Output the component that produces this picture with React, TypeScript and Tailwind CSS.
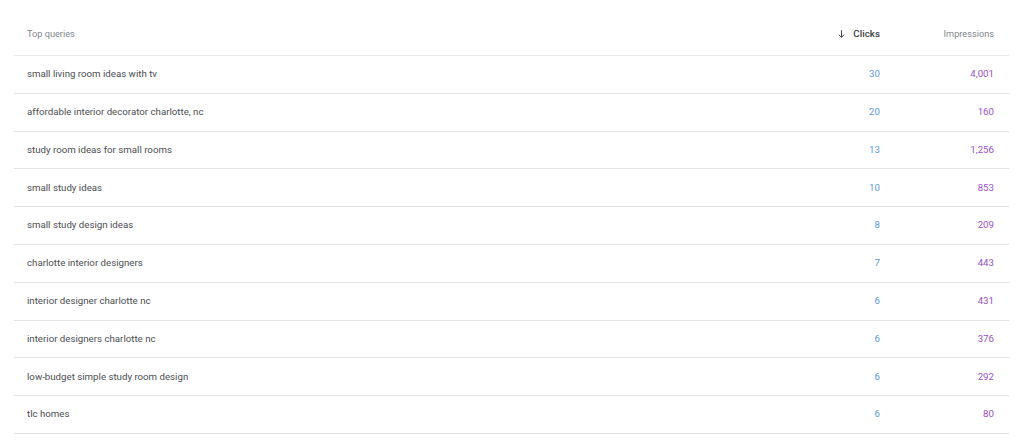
const rows = [
  { q: "small living room ideas with tv", c: "30", i: "4,001" },
  { q: "affordable interior decorator charlotte, nc", c: "20", i: "160" },
  { q: "study room ideas for small rooms", c: "13", i: "1,256" },
  { q: "small study ideas", c: "10", i: "853" },
  { q: "small study design ideas", c: "8", i: "209" },
  { q: "charlotte interior designers", c: "7", i: "443" },
  { q: "interior designer charlotte nc", c: "6", i: "431" },
  { q: "interior designers charlotte nc", c: "6", i: "376" },
  { q: "low-budget simple study room design", c: "6", i: "292" },
  { q: "tlc homes", c: "6", i: "80" },
];

export default function App() {
  return (
    <div className="w-[1024px] h-[441px] bg-white px-[14px] pr-[15px] font-['Roboto',sans-serif] overflow-hidden">
      {/* header */}
      <div className="grid grid-cols-[1fr_120px_114px] items-center h-[56px] border-b border-[#e8e8e8] pr-[15px] pt-[13px] text-[9.2px]">
        <div className="pl-[13px] text-[#80868b]">Top queries</div>
        <div className="flex items-center justify-end gap-[7px] text-[#3c4043] font-medium">
          <svg width="9" height="10" viewBox="0 0 24 24" fill="none" stroke="#3c4043" strokeWidth="2.6">
            <path d="M12 2v19M5 14l7 7 7-7" />
          </svg>
          <span className="text-[9.8px]">Clicks</span>
        </div>
        <div className="text-right text-[#80868b]">Impressions</div>
      </div>

      {/* rows */}
      {rows.map((r) => (
        <div
          key={r.q}
          className="grid grid-cols-[1fr_120px_114px] items-center h-[37.8px] border-b border-[#e3e3e3] pr-[15px] text-[9.7px]"
        >
          <div className="pl-[13px] text-[#4a4d51]">{r.q}</div>
          <div className="text-right text-[#5e97e6]">{r.c}</div>
          <div className="text-right text-[#9a4fc8]">{r.i}</div>
        </div>
      ))}
    </div>
  );
}
